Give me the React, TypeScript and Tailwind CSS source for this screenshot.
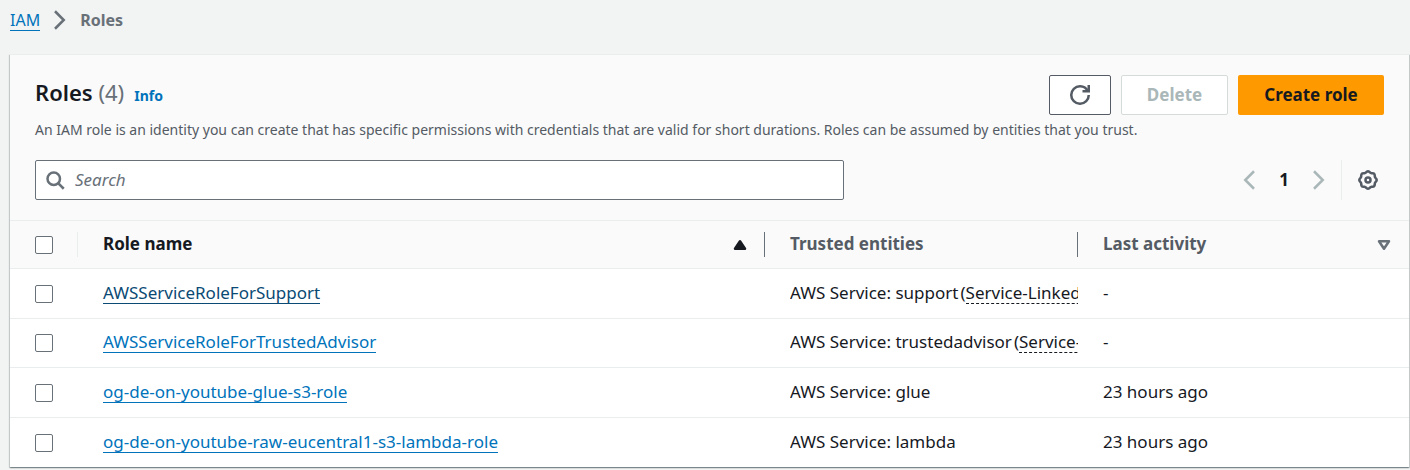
import type { ReactNode } from "react";

type Role = {
  name: string;
  service: string;
  linked?: boolean;
  activity: string;
  visited?: boolean;
};

const roles: Role[] = [
  { name: "AWSServiceRoleForSupport", service: "support", linked: true, activity: "-", visited: true },
  { name: "AWSServiceRoleForTrustedAdvisor", service: "trustedadvisor", linked: true, activity: "-" },
  { name: "og-de-on-youtube-glue-s3-role", service: "glue", activity: "23 hours ago" },
  { name: "og-de-on-youtube-raw-eucentral1-s3-lambda-role", service: "lambda", activity: "23 hours ago" },
];

// Outline of an eight-lobed gear, centred in the 16-unit icon box.
const gearOutline = Array.from({ length: 96 }, (_, i) => {
  const angle = (i / 96) * Math.PI * 2;
  const radius = 6.5 + 0.45 * Math.cos(8 * angle);
  return `${(8 + radius * Math.cos(angle)).toFixed(2)},${(8 + radius * Math.sin(angle)).toFixed(2)}`;
}).join(" ");

function Icon({ children, className }: { children: ReactNode; className?: string }) {
  return (
    <svg
      viewBox="0 0 16 16"
      width="20"
      height="20"
      fill="none"
      stroke="currentColor"
      strokeWidth="2"
      aria-hidden="true"
      className={`shrink-0 ${className ?? ""}`}
    >
      {children}
    </svg>
  );
}

function Checkbox({ label }: { label: string }) {
  return (
    <input
      type="checkbox"
      aria-label={label}
      className="block size-[18px] appearance-none rounded-xs border border-[#687078] bg-white checked:bg-[#0073bb]"
    />
  );
}

function Header() {
  return (
    <header className="border-b border-[#eaeded] bg-[#fafafa] px-[25px] pt-5 pb-5">
      <div className="flex items-start justify-between gap-2">
        <div className="flex items-baseline gap-2.5">
          <h1 className="text-[22px] leading-[34px] font-semibold text-[#16191f]">
            Roles <span className="font-normal text-[#687078]">(4)</span>
          </h1>
          <a href="#info" className="text-sm font-bold text-[#0073bb]">
            Info
          </a>
        </div>
        <div className="flex gap-2.5">
          <button
            type="button"
            aria-label="Refresh"
            className="flex h-10 w-[62px] items-center justify-center rounded-xs border border-[#545b64] bg-white text-[#545b64]"
          >
            <Icon>
              <path d="M10 5h5V0" />
              <path d="M15 8a6.957 6.957 0 0 1-7 7 6.957 6.957 0 0 1-7-7 6.957 6.957 0 0 1 7-7 6.87 6.87 0 0 1 6.3 4" />
            </Icon>
          </button>
          <button
            type="button"
            disabled
            className="h-10 w-[107px] rounded-xs border border-[#d5dbdb] bg-white text-[17px] font-bold text-[#aab7b8]"
          >
            Delete
          </button>
          <button
            type="button"
            className="h-10 w-[146px] rounded-xs bg-[#ff9900] text-[17px] font-bold text-[#16191f]"
          >
            Create role
          </button>
        </div>
      </div>
      <p className="pt-[3px] text-sm leading-6 text-[#545b64]">
        An IAM role is an identity you can create that has specific permissions with credentials that are valid for
        short durations. Roles can be assumed by entities that you trust.
      </p>
      <div className="flex items-center justify-between pt-[18px]">
        <label className="flex h-10 w-3/5 items-center gap-2.5 rounded-xs border border-[#687078] bg-white px-[9px] text-[#687078]">
          <Icon>
            <circle cx="7" cy="7" r="5" />
            <path d="m15 15-4.5-4.5" />
          </Icon>
          <input
            type="search"
            aria-label="Search roles"
            placeholder="Search"
            className="min-w-0 flex-1 bg-transparent text-[17px] outline-none placeholder:text-[#687078] placeholder:italic"
          />
        </label>
        <div className="flex h-10 items-center text-[#aab7b8]">
          <button type="button" disabled aria-label="Previous page">
            <Icon>
              <path d="m12 1-7 7 7 7" />
            </Icon>
          </button>
          <button type="button" className="w-[50px] text-[17px] font-bold text-[#16191f]">
            1
          </button>
          <button type="button" disabled aria-label="Next page">
            <Icon>
              <path d="m4 1 7 7-7 7" />
            </Icon>
          </button>
          <button
            type="button"
            aria-label="Preferences"
            className="ml-3 flex h-10 items-center border-l border-[#eaeded] pr-1.5 pl-4 text-[#545b64]"
          >
            <Icon>
              <circle cx="8" cy="8" r="2" />
              <polygon points={gearOutline} strokeLinejoin="round" />
            </Icon>
          </button>
        </div>
      </div>
    </header>
  );
}

function RolesTable() {
  return (
    <table className="w-full table-fixed border-separate border-spacing-0 text-left text-[17px] text-[#16191f]">
      <colgroup>
        <col className="w-[68px]" />
        <col />
        <col className="w-[313px]" />
        <col className="w-[331px]" />
      </colgroup>
      <thead className="bg-[#fafafa] text-[#545b64]">
        <tr className="h-12">
          <th className="border-b border-[#eaeded] p-0">
            <div className="flex h-[25px] items-center border-r border-[#eaeded] pl-[25px]">
              <Checkbox label="Select all roles" />
            </div>
          </th>
          <th aria-sort="ascending" className="border-b border-[#eaeded] p-0">
            <div className="flex h-[25px] items-center justify-between border-r border-[#687078] pr-3.5 pl-[25px] text-[#16191f]">
              <span className="pb-0.5">Role name</span>
              <Icon>
                <path d="M4 11h8L8 5z" fill="currentColor" strokeLinejoin="round" />
              </Icon>
            </div>
          </th>
          <th className="border-b border-[#eaeded] p-0">
            <div className="flex h-[25px] items-center border-r border-[#687078] pl-[25px]">
              <span className="pb-0.5">Trusted entities</span>
            </div>
          </th>
          <th className="border-b border-[#eaeded] p-0">
            <div className="flex h-[25px] items-center justify-between pr-[15px] pl-[25px]">
              <span className="pb-0.5">Last activity</span>
              <Icon className="text-[#687078]">
                <path d="M4 5h8l-4 6z" strokeLinejoin="round" />
              </Icon>
            </div>
          </th>
        </tr>
      </thead>
      <tbody className="bg-white">
        {roles.map((role) => (
          <tr key={role.name} className="group h-[50px] even:h-[49px]">
            <td className="border-b border-[#eaeded] p-0 pl-[25px] group-last:border-b-0">
              <Checkbox label={`Select ${role.name}`} />
            </td>
            <td className="truncate border-b border-[#eaeded] p-0 pb-0.5 pl-[25px] group-last:border-b-0">
              <a
                href={`#${role.name}`}
                className={`inline-block border-b border-current leading-5 ${
                  role.visited ? "text-[#0a4a74]" : "text-[#0073bb]"
                }`}
              >
                {role.name}
              </a>
            </td>
            <td className="border-b border-[#eaeded] p-0 pb-0.5 pl-[25px] group-last:border-b-0">
              <div className="overflow-hidden whitespace-nowrap">
                AWS Service: {role.service}
                {role.linked && (
                  <span className="ml-0.5">
                    (
                    <span className="inline-block border-b border-dashed border-current leading-5">
                      Service-Linked Role
                    </span>
                    )
                  </span>
                )}
              </div>
            </td>
            <td className="border-b border-[#eaeded] p-0 pb-0.5 pl-[25px] group-last:border-b-0">{role.activity}</td>
          </tr>
        ))}
      </tbody>
    </table>
  );
}

export default function App() {
  return (
    <div className="min-h-screen bg-[#f2f3f3] font-['Noto_Sans',sans-serif]">
      <nav aria-label="Breadcrumb" className="flex h-10 items-center pl-2.5 text-base">
        <a href="#iam" className="border-b border-current leading-5 text-[#0073bb]">
          IAM
        </a>
        <Icon className="mx-2.5 text-[#687078]">
          <path d="m4 1 7 7-7 7" />
        </Icon>
        <span className="font-bold text-[#687078]">Roles</span>
      </nav>
      <main className="mt-3.5 mr-px ml-2.5 border-t border-[#eaeded] shadow-[0_1px_1px_0_rgba(0,28,36,0.3),1px_1px_1px_0_rgba(0,28,36,0.15),-1px_1px_1px_0_rgba(0,28,36,0.15)]">
        <Header />
        <RolesTable />
      </main>
    </div>
  );
}
